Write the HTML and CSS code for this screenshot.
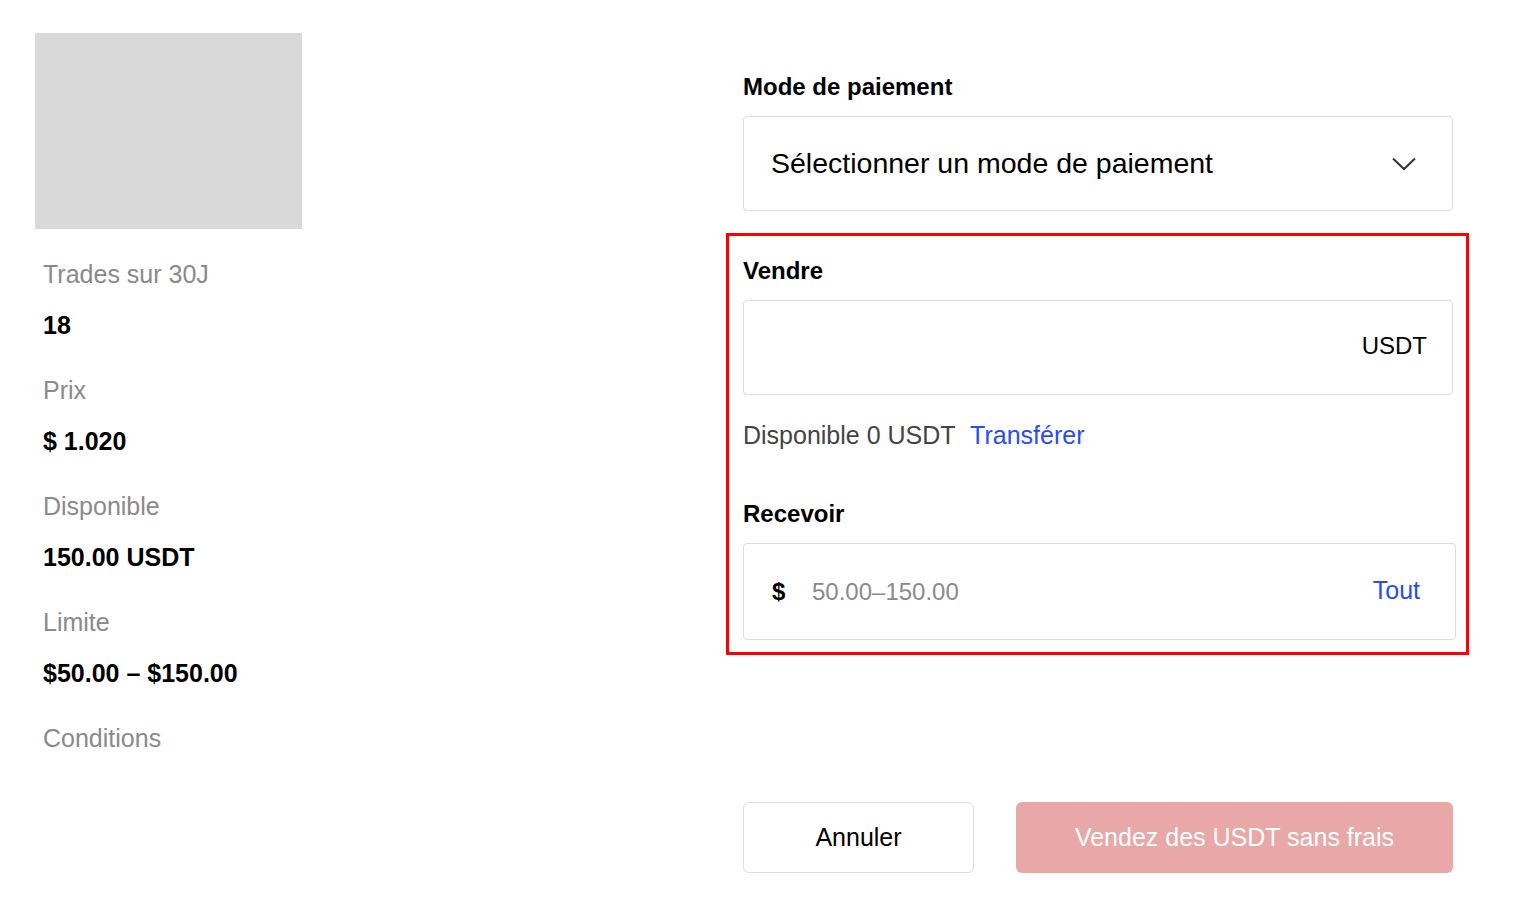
FILE: index.html
```html
<!DOCTYPE html>
<html lang="fr">
<head>
  <meta charset="UTF-8" />
  <meta name="viewport" content="width=device-width, initial-scale=1.0"/>
  <title>Vendre USDT</title>
  <link rel="stylesheet" href="styles.css">
</head>
<body>
  <div class="page">
    <div class="side">
      <div class="thumb"></div>
      <div class="stats">
        <div class="stat-label">Trades sur 30J</div>
        <div class="stat-value">18</div>
        <div class="stat-label">Prix</div>
        <div class="stat-value">$ 1.020</div>
        <div class="stat-label">Disponible</div>
        <div class="stat-value">150.00 USDT</div>
        <div class="stat-label">Limite</div>
        <div class="stat-value">$50.00 – $150.00</div>
        <div class="stat-label">Conditions</div>
      </div>
    </div>

    <div class="main">
      <div class="field">
        <div class="label">Mode de paiement</div>
        <div class="select">
          <span>Sélectionner un mode de paiement</span>
          <svg class="chevron" width="24" height="14" viewBox="0 0 24 14">
            <path d="M1 1.5 L12 12 L23 1.5" fill="none" stroke="#333" stroke-width="2"/>
          </svg>
        </div>
      </div>

      <div class="highlight">
        <div class="label">Vendre</div>
        <div class="input input-sell">
          <span class="unit">USDT</span>
        </div>
        <div class="balance">
          Disponible 0 USDT <a class="link" href="#">Transférer</a>
        </div>

        <div class="label label-receive">Recevoir</div>
        <div class="input input-receive">
          <span class="currency">$</span>
          <span class="placeholder">50.00–150.00</span>
          <a class="link link-all" href="#">Tout</a>
        </div>
      </div>

      <div class="actions">
        <button class="btn btn-cancel">Annuler</button>
        <button class="btn btn-submit">Vendez des USDT sans frais</button>
      </div>
    </div>
  </div>
</body>
</html>
```

FILE: styles.css
```css
:root {
  --text: #111111;
  --muted: #8a8a8a;
  --border: #dcdcdc;
  --blue: #2a4cf2;
  --red: #ff0000;
  --pink: #e8a8a8;
}

* {
  margin: 0;
  padding: 0;
  box-sizing: border-box;
}

body {
  font-family: "Liberation Sans", Arial, sans-serif;
  color: var(--text);
  background: #ffffff;
}

.page {
  display: flex;
  padding-top: 33px;
}

.side {
  margin-left: 35px;
  width: 267px;
}

.thumb {
  height: 196px;
  background: #d9d9d9;
}

.stats {
  padding-left: 8px;
  margin-top: 30px;
  white-space: nowrap;
}

.stat-label {
  font-size: 25px;
  line-height: 30px;
  color: var(--muted);
  margin-bottom: 21px;
}

.stat-value {
  font-size: 25px;
  line-height: 30px;
  font-weight: bold;
  color: #000;
  margin-bottom: 35px;
}

.main {
  margin-left: 424px;
  width: 743px;
  padding-top: 39px;
}

.field {
  padding: 0 16px 0 17px;
}

.label {
  font-size: 24px;
  line-height: 30px;
  font-weight: bold;
  color: #000;
  margin-bottom: 14px;
}

.select {
  height: 95px;
  border: 1px solid var(--border);
  border-radius: 4px;
  display: flex;
  align-items: center;
  justify-content: space-between;
  padding: 0 36px 0 27px;
  font-size: 28.5px;
  color: #000;
}

.highlight {
  margin-top: 22px;
  border: 3px solid var(--red);
  padding: 20px 13px 12px 14px;
}

.input {
  border: 1px solid var(--border);
  border-radius: 4px;
  display: flex;
  align-items: center;
  font-size: 24px;
}

.input-sell {
  height: 95px;
  justify-content: flex-end;
  padding: 0 25px 4px 0;
}

.unit {
  color: #000;
}

.balance {
  margin-top: 25px;
  font-size: 25px;
  line-height: 30px;
  color: #444;
}

.link {
  color: var(--blue);
  text-decoration: none;
  margin-left: 8px;
}

.label-receive {
  margin-top: 49px;
}

.input-receive {
  height: 97px;
  margin-right: -3px;
  padding: 0 35px 0 28px;
}

.currency {
  font-weight: bold;
  color: #000;
  width: 40px;
}

.placeholder {
  color: var(--muted);
  flex: 1;
}

.link-all {
  margin-left: 0;
  margin-top: -3px;
  font-size: 25px;
}

.actions {
  display: flex;
  gap: 42px;
  margin-top: 147px;
  padding: 0 16px 0 17px;
}

.btn {
  height: 71px;
  border-radius: 6px;
  font-family: inherit;
  font-size: 25px;
  cursor: pointer;
}

.btn-cancel {
  width: 231px;
  background: #fff;
  border: 1px solid var(--border);
  color: #000;
}

.btn-submit {
  flex: 1;
  background: var(--pink);
  border: none;
  color: #fff;
}
```
